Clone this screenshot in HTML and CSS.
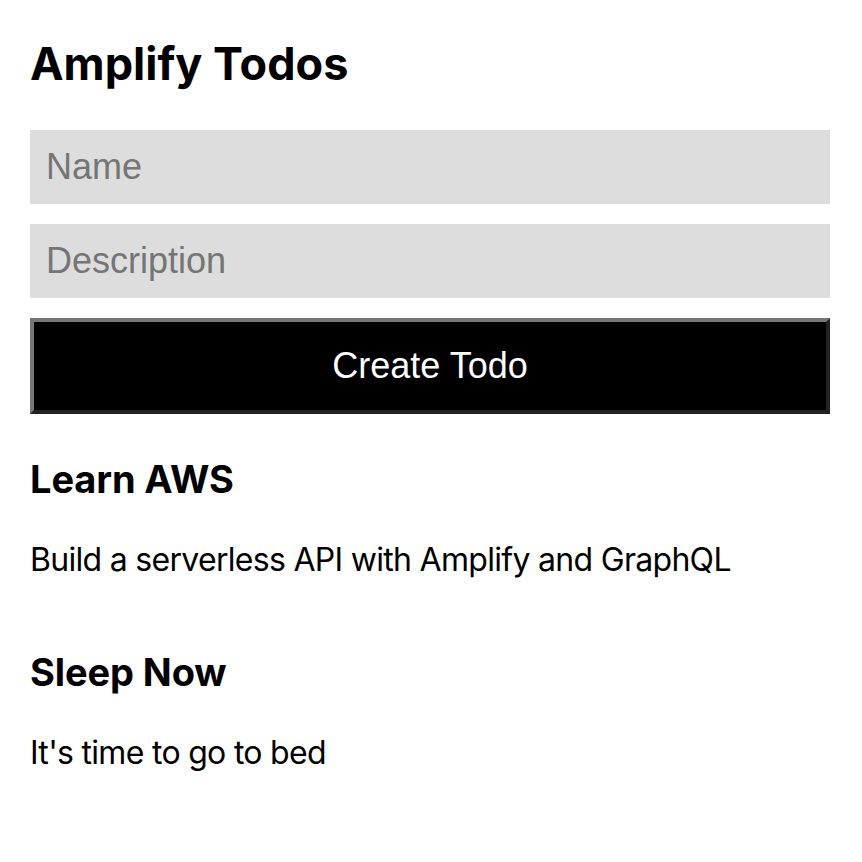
FILE: index.html
```html
<!DOCTYPE html>
<html lang="en">
<head>
<meta charset="utf-8">
<title>Amplify Todos</title>
<link rel="stylesheet" href="styles.css">
</head>
<body>
<div class="container">
  <h1 class="title">Amplify Todos</h1>
  <div class="form">
    <input class="input" type="text" placeholder="Name">
    <input class="input" type="text" placeholder="Description">
    <button class="button" type="button">Create Todo</button>
  </div>
  <div class="todos">
    <div class="todo">
      <h3 class="todo-name">Learn AWS</h3>
      <p class="todo-description">Build a serverless API with Amplify and GraphQL</p>
    </div>
    <div class="todo">
      <h3 class="todo-name">Sleep Now</h3>
      <p class="todo-description">It's time to go to bed</p>
    </div>
  </div>
</div>
</body>
</html>
```

FILE: styles.css
```css
html, body {
  margin: 0;
  padding: 0;
  background: #fff;
}

.container {
  width: 800px;
  padding: 40px 0 0 30px;
  display: flex;
  flex-direction: column;
  font-family: Inter, "Liberation Sans", sans-serif;
  color: #000;
}

.title {
  margin: 0;
  font-size: 45px;
  line-height: 48px;
  font-weight: 700;
}

.form {
  margin-top: 42px;
  display: flex;
  flex-direction: column;
  gap: 20px;
}

.input {
  box-sizing: border-box;
  height: 74px;
  width: 800px;
  margin: 0;
  border: none;
  outline: none;
  background: #ddd;
  padding: 0 16px;
  font-family: "Liberation Sans", Arial, sans-serif;
  font-size: 36px;
  color: #000;
}

.input::placeholder {
  color: #757575;
}

.button {
  box-sizing: border-box;
  height: 96px;
  width: 800px;
  margin: 0;
  background: #000;
  color: #fff;
  border-style: solid;
  border-width: 4px;
  border-color: #767676 #222 #222 #767676;
  font-family: "Liberation Sans", Arial, sans-serif;
  font-size: 36px;
  padding: 0;
}

.todos {
  margin-top: 43px;
  display: flex;
  flex-direction: column;
  gap: 70px;
}

.todo {
  display: flex;
  flex-direction: column;
  gap: 39px;
}

.todo-name {
  margin: 0;
  font-size: 38px;
  line-height: 44px;
  font-weight: 700;
  letter-spacing: -0.1px;
}

.todo-description {
  margin: 0;
  font-size: 32px;
  line-height: 40px;
  font-weight: 400;
  letter-spacing: -0.7px;
}
```
